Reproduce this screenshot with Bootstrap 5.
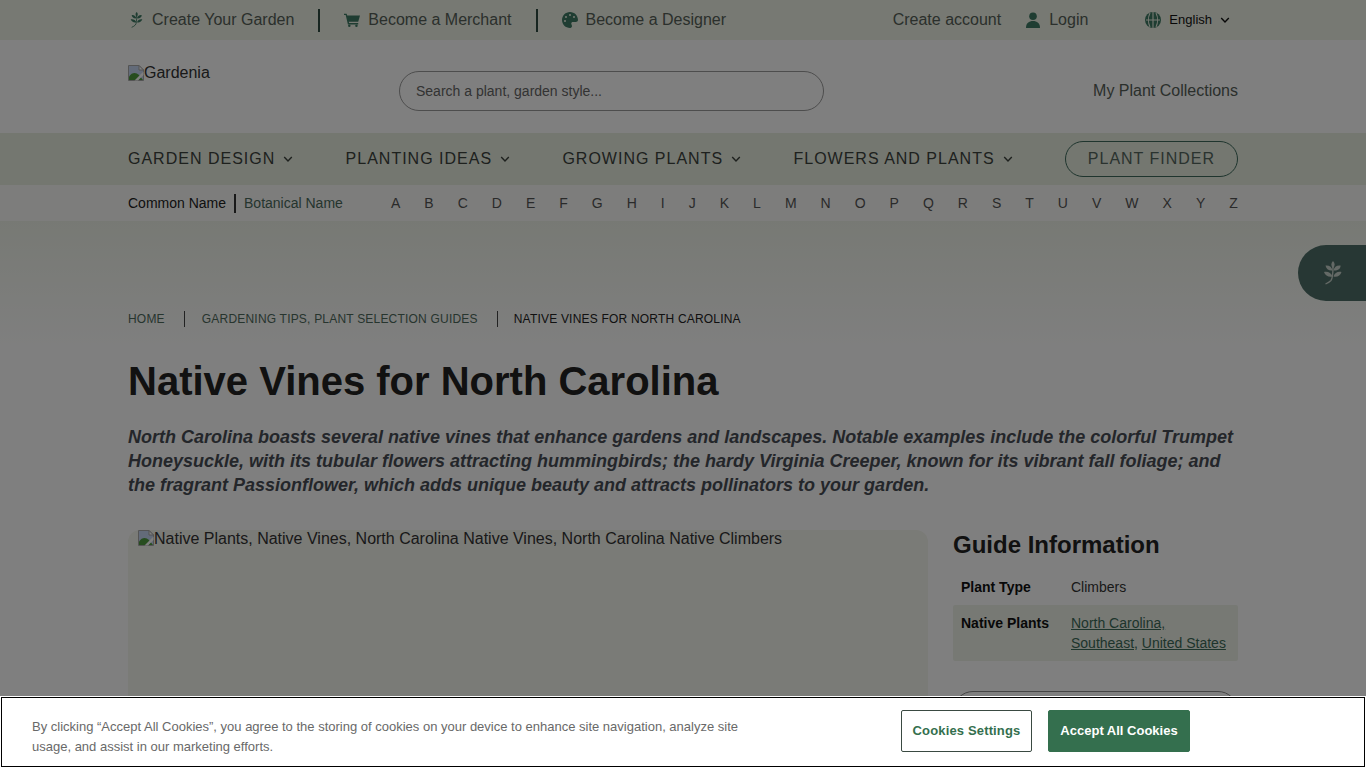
<!DOCTYPE html>
<html lang="en">
<head>
<meta charset="utf-8">
<title>Native Vines for North Carolina</title>
<link href="https://cdn.jsdelivr.net/npm/bootstrap@5.3.0/dist/css/bootstrap.min.css" rel="stylesheet">
<style>
body{font-family:"Liberation Sans",Arial,sans-serif;background:#fff;color:#333;height:768px}
a{text-decoration:none}
.wrap{max-width:1110px;width:1110px;margin:0 auto}
.topstrip{height:40px;background:#eef3e6;font-size:16px;color:#5c6a62}
.topstrip a{color:#566058}
.tico{width:16px;height:16px;fill:#3f7a64;color:#3f7a64;flex:none}
.sep{width:2px;height:23px;background:#2f4a40;margin:0 24px}
.lang{font-size:13px;color:#111;margin-left:57px;margin-right:8px}
.head{height:93px;background:#fff}
.logo{font-size:16px;color:#333;margin-top:21px;width:271px}
.searchbox{width:425px;height:40px;margin-top:31px;border:1px solid #9a9a9a;border-radius:20px;font-size:14px;padding:0 16px;color:#666;background:#fff;box-shadow:none}
.searchbox::placeholder{color:#666;opacity:1}
.coll{font-size:16px;color:#566058;margin-top:39px}
.mainnav{height:52px;background:#e8eee0;font-size:16px;letter-spacing:1px;color:#3c423d}
.mainnav a{color:#3c423d}
.finder{width:173px;height:36px;border:1px solid #3e6a5c;border-radius:18px;color:#55675f!important;display:flex;align-items:center;justify-content:center}
.alpha{height:36px;background:#fbfbf9;font-size:14px}
.alpha .cn{color:#222}
.alpha .bn{color:#4a6a5c}
.vbar{width:2px;height:19px;background:#333;margin:0 8px}
.letters{width:847px;color:#555}
.fadezone{background:linear-gradient(#eff3e9,#fff 130px);padding-top:85px;height:547px}
.crumbs{height:25px;font-size:12px;color:#222;letter-spacing:.2px}
.crumbs a{color:#4e6a5c}
.crumbs span.bar{width:1px;height:16px;background:#444;margin:0 16px 0 19px}
.crumbs span.bar:first-of-type{margin-right:17px}
.ttl{font-size:40px;font-weight:700;color:#222;line-height:46px;margin:27px 0 21px 0}
.intro{font-size:18px;font-weight:700;font-style:italic;line-height:24px;color:#484d55;margin-bottom:33px}
.pic{width:800px;height:238px;background:#f5f6ee;border-radius:12px;padding:0 10px;font-size:16px;color:#333;line-height:18px;flex:none}
.side{width:285px}
.side h2{font-size:24px;font-weight:700;color:#222;margin:0 0 9px 0;line-height:30px}
.gt{font-size:14px;color:#333}
.gt .gl{width:110px;font-weight:700;color:#111}
.gt .r1{padding:8px;line-height:20px}
.gt .r2{padding:8px;line-height:20px;background:#eff3e9;border-radius:2px}
.gt a{color:#3c6a58;text-decoration:underline}
.sbtn{height:50px;border:1px solid #888;border-radius:20px;margin-top:30px}
.veil{position:fixed;inset:0;background:rgba(0,0,0,.5);z-index:10}
.ptab{position:fixed;right:0;top:245px;width:68px;height:56px;background:#4f6f68;border-radius:28px 0 0 28px;z-index:5;display:flex;align-items:center;padding-left:24px;color:#c9d3cc}
.cookie{position:fixed;left:0;right:0;bottom:0;height:72px;background:#fff;outline:1px solid #000;outline-offset:-2px;z-index:20;color:#696969;font-size:13px;line-height:20px;padding-left:32px}
.ctext{width:740px;padding-top:10px}
.btn-cs,.btn-ca{font-size:13px;font-weight:700;height:42px;border-radius:2px;display:flex;align-items:center;justify-content:center;padding:0;margin-bottom:3px}
.btn-cs{width:131px;border:1px solid #3a4a42;color:#346f4e;background:#fff;margin-left:129px;letter-spacing:.15px}
.btn-ca{width:142px;border:1px solid #346f4e;color:#fff;background:#346f4e;margin-left:16px}
.brk{width:16px;height:16px;flex:none}
</style>
</head>
<body class="overflow-hidden">
<svg width="0" height="0" class="d-block">
<defs>
<symbol id="sprig" viewBox="0 0 20 24"><path d="M11 5C11 12 11 17 9 19.500Q7 21.500 3.500 23" fill="none" stroke="currentColor" stroke-width="1.300"/><path d="M11 0c2.200 2 2.200 5 0 7.500c-2.200-2.500-2.200-5.500 0-7.500zM3.500 4.500c3.500-.5 6.500 1.500 7 5c-3.500.5-6.500-1.500-7-5zM18.500 4.500c.5 3.500-3.500 5.500-7 5c.5-3.500 3.500-5.500 7-5zM2 11c3.500-1 7.500 1 8.500 4.500c-3.500 1-7.500-1-8.500-4.500zM19.500 11c-1 3.500-4.500 5.500-8 4.500c1-3.500 4.500-5.500 8-4.500z" fill="currentColor"/></symbol>
<symbol id="broken" viewBox="0 0 16 16"><path d="M.5.500h10.500l4.500 4.500v10.500H.5z" fill="#c6d7f2" stroke="#a8a8a8"/><path d="M11 .5l4.500 4.500H11z" fill="#fff" stroke="#a8a8a8"/><path d="M1 15v-3.500C4 7 8 7 11 10l4 5z" fill="#4f9a3e"/><path d="M15.500 6.500L6.500 15.500h3.500l5.500-5.500z" fill="#fff"/></symbol>
<symbol id="chev" viewBox="0 0 10 10"><path d="M1.200 3L5 7l3.800-4" fill="none" stroke="currentColor" stroke-width="1.400"/></symbol>
</defs>
</svg>

<div class="topstrip">
 <div class="wrap d-flex align-items-center h-100">
  <a class="d-flex align-items-center" href="#"><svg class="tico me-2"><use href="#sprig"/></svg>Create Your Garden</a>
  <span class="sep"></span>
  <a class="d-flex align-items-center" href="#"><svg class="tico me-2" viewBox="0 0 18 16"><path d="M0 1h3l.6 2H18l-2 7H5.400l.4 1.500H16V13H4.400L1.900 2.500H0z"/><circle cx="6" cy="14.600" r="1.400"/><circle cx="14" cy="14.600" r="1.400"/></svg>Become a Merchant</a>
  <span class="sep"></span>
  <a class="d-flex align-items-center" href="#"><svg class="tico me-2" viewBox="0 0 512 512"><path d="M512 256c0 .9 0 1.8 0 2.7c-.4 36.5-33.6 61.3-70.1 61.3H344c-26.5 0-48 21.5-48 48c0 3.4 .4 6.7 1 9.9c2.1 10.2 6.5 20 10.8 29.9c6.1 13.8 12.1 27.5 12.1 42c0 31.8-21.6 60.7-53.4 62c-3.5 .1-7 .2-10.6 .2C114.6 512 0 397.4 0 256S114.6 0 256 0S512 114.6 512 256zM128 288a32 32 0 1 0 -64 0 32 32 0 1 0 64 0zm0-96a32 32 0 1 0 0-64 32 32 0 1 0 0 64zM288 96a32 32 0 1 0 -64 0 32 32 0 1 0 64 0zm96 96a32 32 0 1 0 0-64 32 32 0 1 0 0 64z"/></svg>Become a Designer</a>
  <a class="ms-auto" href="#">Create account</a>
  <a class="d-flex align-items-center ms-4" href="#"><svg class="tico me-2" viewBox="0 0 16 16"><circle cx="8" cy="4.200" r="3.800"/><path d="M1 16c0-5 3-7 7-7s7 2 7 7z"/></svg>Login</a>
  <span class="lang d-flex align-items-center"><svg class="tico me-2" viewBox="0 0 16 16"><circle cx="8" cy="8" r="8"/><path d="M8 0v16M5 1C3 5 3 11 5 15M11 1c2 4 2 10 0 14M1 8h14" stroke="#eef3e6" stroke-width="1.100" fill="none"/></svg>English<svg class="ms-2" width="10" height="10"><use href="#chev"/></svg></span>
 </div>
</div>

<div class="head">
 <div class="wrap d-flex align-items-start">
  <div class="logo d-flex align-items-center"><svg class="brk"><use href="#broken"/></svg>Gardenia</div>
  <input class="form-control searchbox" type="text" placeholder="Search a plant, garden style...">
  <a class="coll ms-auto" href="#">My Plant Collections</a>
 </div>
</div>

<nav class="mainnav">
 <div class="wrap d-flex align-items-center justify-content-between h-100">
  <a class="d-flex align-items-center" href="#">GARDEN DESIGN<svg class="ms-2" width="10" height="10"><use href="#chev"/></svg></a>
  <a class="d-flex align-items-center" href="#">PLANTING IDEAS<svg class="ms-2" width="10" height="10"><use href="#chev"/></svg></a>
  <a class="d-flex align-items-center" href="#">GROWING PLANTS<svg class="ms-2" width="10" height="10"><use href="#chev"/></svg></a>
  <a class="d-flex align-items-center" href="#">FLOWERS AND PLANTS<svg class="ms-2" width="10" height="10"><use href="#chev"/></svg></a>
  <a class="finder" href="#">PLANT FINDER</a>
 </div>
</nav>

<div class="alpha">
 <div class="wrap d-flex align-items-center h-100">
  <span class="cn">Common Name</span><span class="vbar"></span><span class="bn">Botanical Name</span>
  <div class="letters ms-auto d-flex justify-content-between">
   <span>A</span><span>B</span><span>C</span><span>D</span><span>E</span><span>F</span><span>G</span><span>H</span><span>I</span><span>J</span><span>K</span><span>L</span><span>M</span><span>N</span><span>O</span><span>P</span><span>Q</span><span>R</span><span>S</span><span>T</span><span>U</span><span>V</span><span>W</span><span>X</span><span>Y</span><span>Z</span>
  </div>
 </div>
</div>

<div class="fadezone">
<main class="wrap">
 <div class="crumbs d-flex align-items-center"><a href="#">HOME</a><span class="bar"></span><a href="#">GARDENING TIPS, PLANT SELECTION GUIDES</a><span class="bar"></span><span>NATIVE VINES FOR NORTH CAROLINA</span></div>
 <h1 class="ttl">Native Vines for North Carolina</h1>
 <p class="intro">North Carolina boasts several native vines that enhance gardens and landscapes. Notable examples include the colorful Trumpet Honeysuckle, with its tubular flowers attracting hummingbirds; the hardy Virginia Creeper, known for its vibrant fall foliage; and the fragrant Passionflower, which adds unique beauty and attracts pollinators to your garden.</p>
 <div class="d-flex justify-content-between">
  <div class="pic d-flex align-items-start"><svg class="brk"><use href="#broken"/></svg>Native Plants, Native Vines, North Carolina Native Vines, North Carolina Native Climbers</div>
  <aside class="side">
   <h2>Guide Information</h2>
   <div class="gt">
    <div class="d-flex r1"><div class="gl">Plant Type</div><div>Climbers</div></div>
    <div class="d-flex r2"><div class="gl">Native Plants</div><div><a href="#">North Carolina,</a><br><a href="#">Southeast,</a> <a href="#">United States</a></div></div>
   </div>
   <div class="sbtn"></div>
  </aside>
 </div>
</main>
</div>

<div class="ptab"><svg width="20" height="24"><use href="#sprig"/></svg></div>
<div class="veil"></div>

<div class="cookie d-flex align-items-center">
 <div class="ctext">By clicking “Accept All Cookies”, you agree to the storing of cookies on your device to enhance site navigation, analyze site usage, and assist in our marketing efforts.</div>
 <button class="btn btn-cs" type="button">Cookies Settings</button>
 <button class="btn btn-ca" type="button">Accept All Cookies</button>
</div>
</body>
</html>
